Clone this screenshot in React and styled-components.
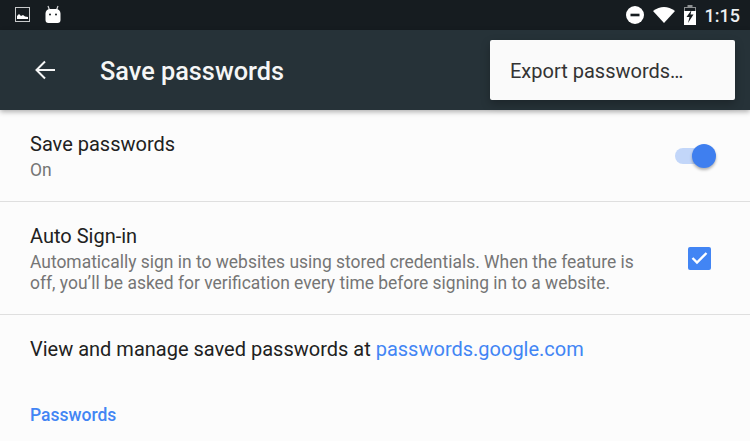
import React from 'react';
import styled, { createGlobalStyle } from 'styled-components';

const Global = createGlobalStyle`
    html, body { margin: 0; padding: 0; background: #fcfcfc; }
    body { font-family: Roboto, "Liberation Sans", sans-serif; }
`
const Screen = styled.div`
    position: relative;
    width: 750px;
    height: 441px;
    overflow: hidden;
    background: #fcfcfc;
`
const StatusBar = styled.div`
    height: 30px;
    background: #161c20;
    display: flex;
    align-items: center;
    justify-content: space-between;
    padding: 0 10px 0 15px;
`
const StatusGroup = styled.div`
    display: flex;
    align-items: center;
    gap: ${p => p.$gap || 15}px;
`
const Clock = styled.span`
    color: #eceff1;
    font-size: 18px;
    font-weight: 500;
`
const AppBar = styled.header`
    height: 80px;
    background: #263238;
    display: flex;
    align-items: center;
    padding-left: 33px;
    gap: 43px;
    box-shadow: 0 2px 5px rgba(0, 0, 0, 0.3);
    position: relative;
`
const Title = styled.h1`
    margin: 2px 0 0;
    color: #f5f6f6;
    font-size: 25.3px;
    font-weight: 500;
`
const Menu = styled.div`
    position: absolute;
    top: 40px;
    left: 490px;
    width: 245px;
    height: 60px;
    box-sizing: border-box;
    padding: 2px 0 0 20px;
    display: flex;
    align-items: center;
    background: #fafafa;
    border-radius: 2px;
    color: #333;
    font-size: 20px;
    box-shadow: 0 4px 10px rgba(0, 0, 0, 0.25);
`
const Row = styled.div`
    height: ${p => p.$height}px;
    box-sizing: border-box;
    display: flex;
    align-items: center;
    justify-content: space-between;
    padding: 0 39px 0 30px;
    border-bottom: 1px solid #dfdfdf;
`
const RowTitle = styled.div`
    color: #212121;
    font-size: 20px;
    line-height: 26px;
`
const RowSub = styled.div`
    color: #757575;
    font-size: 17.45px;
    line-height: 21px;
    margin-top: 3px;
`
const LinkRow = styled.div`
    color: #212121;
    font-size: 20px;
    line-height: 26px;
    padding: 21px 30px 0;
`
const Link = styled.a`
    color: #4285f4;
    text-decoration: none;
`
const Section = styled.div`
    color: #4285f4;
    font-size: 17.5px;
    font-weight: 500;
    padding: 43px 30px 0;
`
const Switch = styled.div`
    position: relative;
    width: 37px;
    height: 16px;
    margin-right: -1px;
    border-radius: 8px;
    background: #c2d6f9;
    &::after {
        content: '';
        position: absolute;
        top: -4px;
        right: -4px;
        width: 24px;
        height: 24px;
        border-radius: 50%;
        background: #3f7fef;
        box-shadow: 0 2px 3px rgba(0, 0, 0, 0.3);
    }
`
const Check = styled.div`
    width: 23px;
    height: 23px;
    border-radius: 2px;
    background: #4285f4;
    display: flex;
    align-items: center;
    justify-content: center;
`

const Picture = () => (
    <svg width="16" height="16" viewBox="0 0 16 16">
        <rect x="0.5" y="0.5" width="14" height="14" fill="none" stroke="#c8cacb" strokeWidth="1" />
        <path d="M2 12V9l2-2 2 2 2-1 2 1.5 3 .5v2z" fill="#fff" />
    </svg>
)
const Robot = () => (
    <svg width="16" height="20" viewBox="0 0 16 20">
        <path d="M3 1l1.500 4M13 1l-1.500 4" stroke="#d5d7d8" strokeWidth="1.200" fill="none" />
        <path d="M5 4h6a4.500 4.500 0 0 1 4.500 4.500V15a3 3 0 0 1-3 3h-9a3 3 0 0 1-3-3V8.500A4.500 4.500 0 0 1 5 4z" fill="#fff" />
        <circle cx="5" cy="9.500" r="1" fill="#161c20" />
        <circle cx="11" cy="9.500" r="1" fill="#161c20" />
    </svg>
)
const Dnd = () => (
    <svg width="18" height="18" viewBox="0 0 18 18">
        <circle cx="9" cy="9" r="9" fill="#fff" />
        <rect x="4.500" y="7.700" width="9" height="2.600" fill="#161c20" />
    </svg>
)
const Wifi = () => (
    <svg width="22" height="16" viewBox="0 0 22 16">
        <path d="M11 16L0 4Q11-4 22 4z" fill="#fff" />
    </svg>
)
const Battery = () => (
    <svg width="12" height="20" viewBox="0 0 12 20">
        <path d="M3.500 0h5v2H12v18H0V2h3.500z" fill="#8d9092" />
        <path d="M0 6h12v14H0z" fill="#fff" />
        <path d="M1 3h10v3H1z" fill="#161c20" />
        <path d="M7.500 5L2.500 12h3L4 18l5.500-8.500h-3z" fill="#161c20" />
    </svg>
)
const Back = () => (
    <svg width="24" height="24" viewBox="0 0 24 24" fill="none" stroke="#f5f6f6" strokeWidth="2">
        <path d="M22 12H3.500M12 3.500L3.500 12l8.500 8.500" />
    </svg>
)
const Tick = () => (
    <svg width="17" height="14" viewBox="0 0 17 14" fill="none" stroke="#fff" strokeWidth="2.400">
        <path d="M1.500 7l4.500 4.500L15.500 2" />
    </svg>
)

export default function App() {
    return (
        <Screen>
            <Global />
            <StatusBar>
                <StatusGroup $gap={14}>
                    <Picture />
                    <Robot />
                </StatusGroup>
                <StatusGroup $gap={9}>
                    <Dnd />
                    <Wifi />
                    <Battery />
                    <Clock>1:15</Clock>
                </StatusGroup>
            </StatusBar>
            <AppBar>
                <Back />
                <Title>Save passwords</Title>
            </AppBar>
            <Menu>Export passwords…</Menu>
            <Row $height={92}>
                <div>
                    <RowTitle>Save passwords</RowTitle>
                    <RowSub>On</RowSub>
                </div>
                <Switch />
            </Row>
            <Row $height={113}>
                <div>
                    <RowTitle>Auto Sign-in</RowTitle>
                    <RowSub>
                        Automatically sign in to websites using stored credentials. When the feature is<br />
                        off, you’ll be asked for verification every time before signing in to a website.
                    </RowSub>
                </div>
                <Check><Tick /></Check>
            </Row>
            <LinkRow>View and manage saved passwords at <Link>passwords.google.com</Link></LinkRow>
            <Section>Passwords</Section>
        </Screen>
    )
}
